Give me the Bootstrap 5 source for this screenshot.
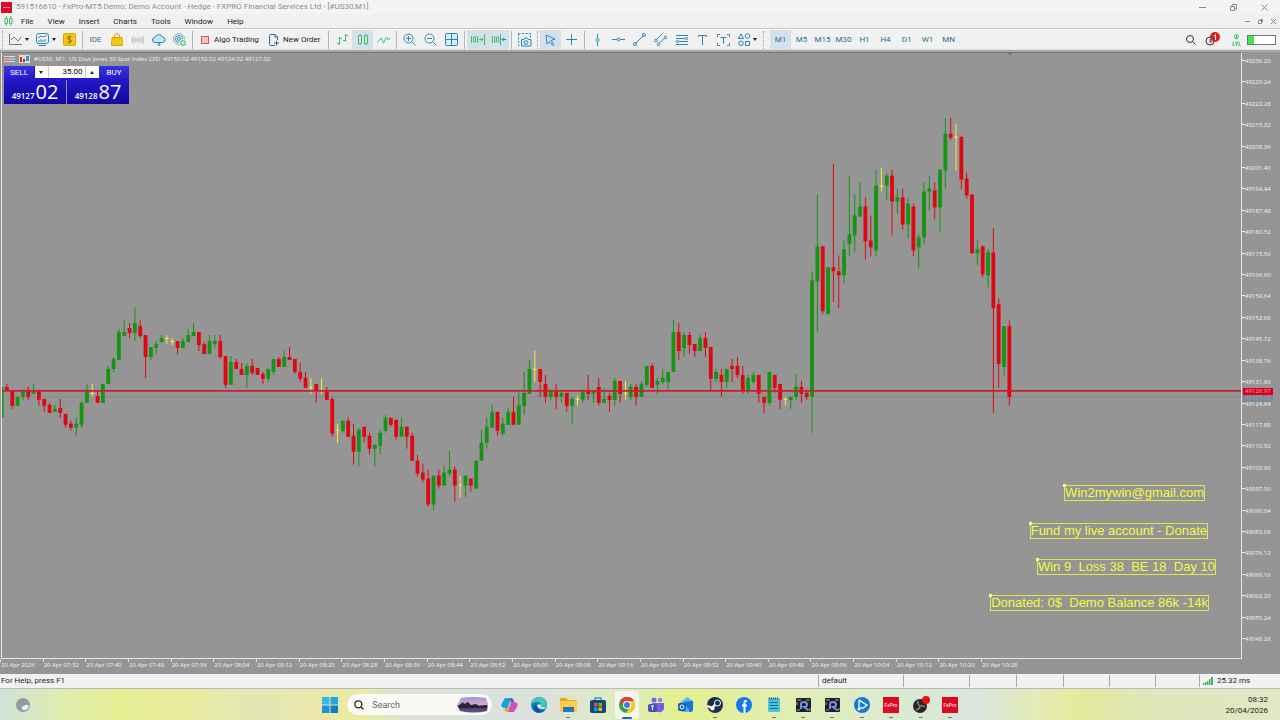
<!DOCTYPE html>
<html lang="en">
<head>
<meta charset="utf-8">
<meta name="viewport" content="width=device-width, initial-scale=1">
<title>FxPro MT5 - #US30,M1</title>
<link href="https://cdn.jsdelivr.net/npm/bootstrap@5.3.0/dist/css/bootstrap.min.css" rel="stylesheet">
<style>
:root{--line:#2b86b8;--green:#3fc163;--chart:#959595}
body{font-family:Roboto,"Open Sans",sans-serif;font-size:8px;line-height:14px;color:#1c1c1c;background:var(--chart)}
button{font:inherit;color:inherit;background:none;border:0;padding:0}
svg{display:block;flex:none}
.titlebar{height:14px;background:#f4f4f4;color:#8c8c8c}
.menubar{height:15px;background:#f0f0f0;border-bottom:1px solid #c4c4c4;line-height:15px}
.menubar a{color:#1c1c1c;text-decoration:none}
.menu-links{gap:14px}
.toolbar-row{height:21px;background:#f1f1f1;border-top:1px solid #fafafa;border-bottom:1px solid #e2e2e2}
.tool{width:21px;height:19px;display:flex;align-items:center;justify-content:center}
.tool.wide{width:27px;gap:2px}
.tool.on{background:#d3e1ec}
.tool svg,.ic svg{fill:none;stroke:var(--line);stroke-width:1}
.tool svg.gr{stroke:var(--green)}
.labelled{display:flex;align-items:center;gap:5px;padding-left:5px;white-space:nowrap}
.labelled.algo{width:69px;padding-left:6px}
.labelled.order{width:62px;gap:4px}
.rule-v{width:1px;height:18px;background:#b5b5b5;margin:0 2px}
.grip{width:1px;height:18px;border-left:1px dotted #999;margin:0 2px}
.tf{color:#26708f}
.caret-s{width:0;height:0;border:2px solid transparent;border-top:3px solid #222;border-bottom:0}
.window-edge{background:var(--chart);border-top:2px solid #a8a8a8}
.plot{border:1px solid #e4e4e4;border-top-color:#777;min-height:300px;margin-left:1px}
.plot>svg{position:absolute;inset:0;width:100%;height:100%}
.tiny{font-family:"Open Sans","Noto Sans",sans-serif;font-size:6px;line-height:8px;color:#f2f2f2}
.caption-row{position:absolute;left:2px;top:2px;gap:4px;white-space:pre}
.ticket{position:absolute;left:2px;top:13px;width:125px;color:#fff}
.blue-btn{background:linear-gradient(#3b34dd,#2419c8);height:14px;width:30px;line-height:14px}
.blue-px{background:linear-gradient(#2318c6,#1208a0);height:24px;line-height:24px;font-family:"Open Sans","Noto Sans",sans-serif;font-size:20px}
.blue-px small{font-size:8px;font-weight:600;margin-right:1px}
.px-pair{gap:1px;background:#8f8ce0}
.lots{background:#fff;color:#222;height:12px}
.lots input{width:38px;border:0;border-left:1px solid #ccc;border-right:1px solid #ccc;text-align:right;font:inherit;height:12px;padding:0 2px}
.lots button{width:13px}
.tag{position:absolute;border:1px solid #dfe64a;color:#f4fa3c;font:13px/14px "Liberation Sans",Arial,sans-serif;white-space:pre}
.tag::before{content:"";position:absolute;left:-2px;top:-2px;width:3px;height:3px;background:#fbfda0}
.axis-y{width:38px;padding:5px 0 16px}
.axis-y div::before{content:"";display:inline-block;width:3px;height:1px;background:#eee;vertical-align:2px}
.price-now{position:absolute;left:1px;width:30px;height:7px;line-height:7px;padding-left:2px}
.axis-x{height:15px;display:grid;grid-template-columns:repeat(30,3.333%);white-space:nowrap;overflow:hidden;line-height:13px}
.axis-x div{border-left:1px solid #ddd;height:3px}
.status{height:15px;background:#f1f1f1;border-bottom:1px solid #bbb}
.status>div{border-left:1px solid #a8a8a8;height:12px;line-height:12px;padding-left:3px}
.status>div:first-child{border:0;padding-left:1px}
.taskbar{height:31px;background:linear-gradient(90deg,#cfe3d8 0,#e0ecae 5%,#e6ef94 9%,#eaec9c 14%,#e1e7b6 20%,#ece7a8 25%,#e9eca0 28%,#dde2dc 32%,#dbe2de 42%,#dfecbb 49%,#e3ef8e 53%,#e2eeac 60%,#dcebca 68%,#d8e6de 76%,#e4ebb6 81%,#e5ea9c 84%,#dfe7bb 90%,#e0e7c4 100%)}
.dock{width:644px}
.ic{width:24px;height:28px;display:flex;align-items:center;justify-content:center;position:relative}
.ic.run::after{content:"";position:absolute;bottom:1px;width:4px;height:1px;background:#76796c}
.ic.active{background:#f3f7ee;border-radius:3px}
.ic.active::after{content:"";position:absolute;bottom:0;width:10px;height:2px;border-radius:1px;background:#1970ad}
.ic svg{stroke:none}
.find{width:145px;height:21px;border-radius:11px;background:#f9faf5;padding-left:7px}
.find input{width:77px;border:0;background:none;font-size:9px;padding:0;outline:0}
.find input::placeholder{color:#666;opacity:1}
.side{width:80px;line-height:11px}
</style>
</head>
<body class="min-vh-100 d-flex flex-column overflow-hidden">
<header>
  <div class="titlebar d-flex align-items-center">
    <svg class="me-1" width="12" height="11"><path d="M1 0h11v11H1z" fill="#dc0a20"/><path d="M3 5.500h7" stroke="#f4a0a8" stroke-width="1" stroke-dasharray="2 .5"/></svg>
    <span class="flex-grow-1">591516610 - FxPro-MT5 Demo: Demo Account - Hedge - FXPRO Financial Services Ltd - [#US30,M1]</span>
    <div class="d-flex gap-4 pe-2 me-1">
      <button aria-label="Minimise"><svg width="7" height="7" stroke="#888"><path d="M0 3.500h7"/></svg></button>
      <button aria-label="Restore"><svg width="7" height="7" fill="none" stroke="#888"><path d="M.5 2.500h4v4h-4zM2 2V.5h4.500V5H5"/></svg></button>
      <button aria-label="Close"><svg width="7" height="7" stroke="#888"><path d="M.5.5l6 6m0-6l-6 6"/></svg></button>
    </div>
  </div>
  <nav class="menubar d-flex align-items-center ps-1">
    <svg class="me-2" width="9" height="10" fill="none" stroke="#3fc163"><path d="M1 2.500h2.500v5H1zM5.500 2.500H8v5H5.500zM2.300 0v2.500m0 5V10M6.800 0v2.500m0 5V10"/></svg>
    <div class="menu-links d-flex flex-grow-1"><a href="#">File</a><a href="#">View</a><a href="#">Insert</a><a href="#">Charts</a><a href="#">Tools</a><a href="#">Window</a><a href="#">Help</a></div>
    <div class="d-flex gap-2 pe-1">
      <button aria-label="Minimise chart"><svg width="5" height="5" stroke="#888"><path d="M0 2.500h5"/></svg></button>
      <button aria-label="Restore chart"><svg width="5" height="5" fill="none" stroke="#888"><path d="M.5 1.500h3v3h-3zM2 .5h2.500V3"/></svg></button>
      <button aria-label="Close chart"><svg width="5" height="5" stroke="#888"><path d="M0 0l5 5m0-5L0 5"/></svg></button>
    </div>
  </nav>
  <div class="toolbar-row d-flex align-items-center">
    <i class="grip"></i>
    <button class="tool wide" aria-label="Chart"><svg width="15" height="13"><path d="M1.500 1v10.500H14" stroke="#777"/><path d="M3 7l3-3 4 4 3-4"/></svg><i class="caret-s"></i></button>
    <button class="tool wide" aria-label="Indicators"><svg width="15" height="13"><rect x="1.500" y=".5" width="12" height="10" rx="2"/><path d="M3 5l3-2 3 1 3-2M4 9V7m2 2V6m2 3V7m2 2V6m-6 6.500h7"/></svg><i class="caret-s"></i></button>
    <button class="tool" aria-label="Quotes"><svg width="13" height="13"><rect x=".5" y=".5" width="12" height="12" rx="1" fill="#f6c615" stroke="#d9a505"/><path d="M8.500 4.500C8 3 4.500 3 4.500 5s4 1 4 3-3.500 2-4 .5M6.500 2.500v8" stroke="#93700a"/></svg></button>
    <i class="rule-v"></i>
    <button class="tool tf">IDE</button>
    <button class="tool" aria-label="Market"><svg width="12" height="13"><path d="M1 4.500h10l.5 8H.5z" fill="#f7c51a" stroke="#d9a505"/><path d="M3.500 6V3a2.500 2.500 0 015 0v3" stroke="#d9a505"/></svg></button>
    <button class="tool" aria-label="Signals"><svg width="14" height="10" style="stroke:#b0b0b0"><circle cx="7" cy="5" r="1.500"/><path d="M4.500 2.500q-2 2.500 0 5M2.500 1q-3 4 0 8M9.500 2.500q2 2.500 0 5M11.500 1q3 4 0 8"/></svg></button>
    <button class="tool" aria-label="Cloud"><svg width="14" height="12"><path d="M4 8.500H3a2.500 2.500 0 010-5 4 4 0 017.500-.5A2.800 2.800 0 0111 8.500H4M7 8.500v1" fill="#c4e6f7"/><circle cx="7" cy="10.500" r="1"/></svg></button>
    <button class="tool" aria-label="Add"><svg width="14" height="14"><circle cx="6" cy="6" r="5.500" stroke="#8aa"/><circle cx="6" cy="6" r="3.500"/><circle cx="6" cy="6" r="1.500"/><circle cx="10" cy="10" r="3.500" fill="#4fc86e" stroke="#fff"/><path d="M8 10h4m-2-2v4" stroke="#fff"/></svg></button>
    <i class="rule-v"></i>
    <button class="labelled algo"><svg width="8" height="8"><rect x=".5" y=".5" width="7" height="7" fill="#f9c9c9" stroke="#d85555"/></svg>Algo Trading</button>
    <button class="labelled order"><svg width="10" height="12" fill="none" stroke="#2b6f95"><path d="M6 11.500H1.500a1 1 0 01-1-1v-9a1 1 0 011-1H6l2.500 2.500V6M6 .5V3h2.500M7.500 6.500v5M5 9h5"/></svg>New Order</button>
    <i class="rule-v"></i>
    <button class="tool" aria-label="Bars"><svg class="gr" width="12" height="13"><path d="M3.500 4v8M1 10.500h2.500m0-5H6M9.500 1v8M7 7.500h2.500m0-5H12"/></svg></button>
    <button class="tool on" aria-label="Candles"><svg class="gr" width="12" height="13"><path d="M1.500 2.500h3v8h-3zM7.500 2.500h3v8h-3zM3 1v1m0 9v1m6-11v1m0 9v1"/></svg></button>
    <button class="tool" aria-label="Line"><svg class="gr" width="13" height="10"><path d="M.5 7.500L4 3l2.500 5L9.500 2l2 3 1.500-2"/></svg></button>
    <i class="rule-v"></i>
    <button class="tool" aria-label="Zoom in"><svg width="13" height="13"><circle cx="5.500" cy="5.500" r="4.500"/><path d="M9 9l3.500 3.500M3 5.500h5M5.500 3v5"/></svg></button>
    <button class="tool" aria-label="Zoom out"><svg width="13" height="13"><circle cx="5.500" cy="5.500" r="4.500"/><path d="M9 9l3.500 3.500M3 5.500h5"/></svg></button>
    <button class="tool" aria-label="Tile"><svg width="13" height="13"><rect x=".5" y=".5" width="12" height="12" rx="1" fill="#d9edf6"/><path d="M6.500 0v13M0 6.500h13"/></svg></button>
    <i class="rule-v"></i>
    <button class="tool on" aria-label="Auto scroll"><svg class="gr" width="14" height="11"><path d="M.5 2v7M2.500 3h2v5h-2zM6.500 2v7"/><path d="M8 5.500h4M10 3.500l2 2-2 2M13.500 0v11"/></svg></button>
    <button class="tool on" aria-label="Shift"><svg class="gr" width="14" height="11"><path d="M.5 2v7M2.500 3h2v5h-2zM6.500 2v7M8.500 0v11"/><path d="M10 5.500h4M12 3.500l-2 2 2 2" stroke="#2b86b8"/></svg></button>
    <i class="rule-v"></i>
    <button class="tool" aria-label="Screenshot"><svg width="14" height="14"><rect x=".5" y=".5" width="12" height="12" stroke-dasharray="2 1.500"/><path d="M3.500 6.500H6l1-1.500h2.500l1 1.500H13v6.500H3.500z" fill="#d5ecf8"/><circle cx="8" cy="9.500" r="1.800"/></svg></button>
    <i class="grip"></i>
    <button class="tool on" aria-label="Cursor"><svg width="11" height="12"><path d="M1 1l9 4-4 1.500 3 4-1.500 1-2.700-4L2 10z"/></svg></button>
    <button class="tool" aria-label="Crosshair"><svg width="11" height="11"><path d="M5.500 0v11M0 5.500h11"/></svg></button>
    <i class="rule-v"></i>
    <button class="tool" aria-label="Vertical line"><svg width="5" height="12"><path d="M2.500 0v4m0 4v4"/><circle cx="2.500" cy="6" r="1.500"/></svg></button>
    <button class="tool" aria-label="Horizontal line"><svg width="13" height="5"><path d="M0 2.500h5m3 0h5"/><circle cx="6.500" cy="2.500" r="1.500"/></svg></button>
    <button class="tool" aria-label="Trend line"><svg width="13" height="13"><path d="M3 10l7-7"/><circle cx="2" cy="11" r="1.500"/><circle cx="11" cy="2" r="1.500"/></svg></button>
    <button class="tool" aria-label="Channel"><svg width="13" height="13"><path d="M2.500 6.500L8 1M5 10.500l5.500-5.500"/><circle cx="1.800" cy="7.500" r="1.300"/><circle cx="4.500" cy="11.500" r="1.300"/><circle cx="11.500" cy="4.500" r="1.300"/></svg></button>
    <button class="tool" aria-label="Fibonacci"><svg width="14" height="12"><path d="M1 1.500h12M1 4.500h9M4 7.500h9M1 10.500h12"/><circle cx="11.500" cy="4.500" r="1.200"/><circle cx="2.500" cy="7.500" r="1.200"/></svg></button>
    <button class="tool" aria-label="Text"><svg width="9" height="10"><path d="M.5 2V.5h8V2m-4-1.500V10"/></svg></button>
    <button class="tool" aria-label="Label"><svg width="13" height="12"><path d="M.5 3V.5H3m7 0h2.500V3m0 6v2.500H10m-7 0H.5V9" stroke="#777"/><path d="M3.500 3.500h6m-3 0V10"/></svg></button>
    <button class="tool wide" aria-label="Shapes"><svg width="13" height="13"><path d="M3 .8L5.500 5.500H.5zM7.500 8.500h4v4h-4z"/><circle cx="9.500" cy="3" r="2.300"/><circle cx="3" cy="10.300" r="2.300"/></svg><i class="caret-s"></i></button>
    <i class="grip"></i>
    <div class="d-flex tf ms-1"><button class="tool on">M1</button><button class="tool">M5</button><button class="tool">M15</button><button class="tool">M30</button></div>
    <div class="d-flex tf"><button class="tool">H1</button><button class="tool">H4</button><button class="tool">D1</button><button class="tool">W1</button><button class="tool">MN</button></div>
    <div class="d-flex align-items-center ms-auto pe-1">
      <button class="tool" aria-label="Search"><svg width="10" height="10" style="stroke:#333"><circle cx="4" cy="4" r="3.500"/><path d="M6.500 6.500l3 3"/></svg></button>
      <button class="tool" aria-label="Notifications"><svg width="16" height="15"><circle cx="6" cy="9" r="4" stroke="#333"/><path d="M6 7v3h2" stroke="#333"/><circle cx="11" cy="5" r="5" fill="#d3231c" stroke="none"/><path d="M10 4l1.500-1.500V8" stroke="#fff"/></svg></button>
      <button class="tool ms-1" aria-label="Level"><svg class="gr" width="9" height="12"><circle cx="4.500" cy="2.500" r="2"/><path d="M4.500 1.500v4M1 7.500v4h1.500M3.500 7.500l1 4 1-4M7 7.500v4h1.500"/></svg></button>
      <div class="d-flex border border-secondary bg-white" style="width:29px;height:10px"><i style="width:22%;background:#4de04d"></i></div>
    </div>
  </div>
</header>
<main class="window-edge flex-grow-1 d-flex flex-column ps-0">
  <div class="d-flex flex-grow-1">
    <section class="plot flex-grow-1 position-relative">
      <svg id="candles" viewBox="2 52 1239 607" preserveAspectRatio="none"></svg>
      <div class="caption-row d-flex align-items-center tiny">
        <svg width="11" height="8"><path d="M1 1h4v6H1z" fill="#d66"/><path d="M6 1h4v6H6z" fill="#79c"/><path d="M0 1.500h11M0 4h11M0 6.500h11" stroke="#fff" stroke-width=".7"/></svg>
        <svg width="11" height="8"><path d="M0 0h11v8H0z" fill="#ddd"/><path d="M1 2h2v5H1zM4 4h2v3H4z" fill="#d22"/><path d="M7 1h3v5H7z" fill="#3a8fe0"/></svg>
        <span>#US30, M1:  US Dow Jones 30 Spot Index CFD  49150.02 49152.02 49124.02 49127.02</span>
      </div>
      <div class="ticket">
        <div class="d-flex justify-content-between" style="background:#2419c8">
          <button class="blue-btn">SELL</button>
          <div class="lots d-flex"><button aria-label="Less"><svg class="m-auto" width="4" height="3"><path d="M0 0l2 3 2-3z" fill="#222"/></svg></button><input aria-label="Volume" value="35.00"><button aria-label="More"><svg class="m-auto" width="4" height="3"><path d="M0 3l2-3 2 3z" fill="#222"/></svg></button></div>
          <button class="blue-btn">BUY</button>
        </div>
        <div class="px-pair d-flex"><button class="blue-px flex-fill"><small>49127</small>02</button><button class="blue-px flex-fill"><small>49128</small>87</button></div>
      </div>
      <div class="tag" style="right:36px;bottom:157px">Win2mywin@gmail.com</div>
      <div class="tag" style="right:33px;bottom:119px">Fund my live account - Donate</div>
      <div class="tag" style="right:25px;bottom:83px">Win 9  Loss 38  BE 18  Day 10</div>
      <div class="tag" style="right:32px;bottom:47px">Donated: 0$  Demo Balance 86k -14k</div>
    </section>
    <aside class="axis-y position-relative d-flex flex-column justify-content-between tiny" id="prices">
      <span class="price-now" style="top:56.500%;background:#7b8a98;color:#93a0ac">49127.02</span>
      <span class="price-now" style="top:55.300%;background:#d8001c;color:#f59aa4">49128.97</span>
    </aside>
  </div>
  <div class="axis-x tiny" id="times"></div>
</main>
<footer>
  <div class="status d-flex align-items-center">
    <div class="flex-grow-1">For Help, press F1</div><div style="width:85px">default</div><div style="width:66px"></div><div style="width:47px"></div><div style="width:47px"></div><div style="width:46px"></div><div style="width:46px"></div><div style="width:44px"></div>
    <div class="d-flex align-items-center gap-1" style="width:81px"><svg width="10" height="8" fill="#3fb95f"><path d="M0 6h1.500v2H0zM2 5h1.500v3H2zM4 4h1.500v4H4zM6 2h1.500v6H6zM8 0h2v8H8z"/></svg>25.32 ms</div>
  </div>
  <div class="taskbar d-flex align-items-center justify-content-between">
    <div class="side ps-3"><svg width="14" height="14"><circle cx="7" cy="7" r="7" fill="#8f9aa4"/><path d="M6 11a2 2 0 012-3 3 3 0 015 0 7 7 0 01-3 4H7z" fill="#eef2f5"/></svg></div>
    <div class="dock d-flex align-items-center justify-content-between">
      <button class="ic" aria-label="Start"><svg width="16" height="16"><path d="M0 0h7.500v7.500H0z" fill="#35b5ea"/><path d="M8.500 0H16v7.500H8.500z" fill="#25a3e2"/><path d="M0 8.500h7.500V16H0z" fill="#1b93d9"/><path d="M8.500 8.500H16V16H8.500z" fill="#0d7fcc"/></svg></button>
      <div class="find d-flex align-items-center gap-2"><svg width="10" height="10" fill="none" stroke="#222" stroke-width="1.300"><circle cx="4.300" cy="4.300" r="3.500"/><path d="M7 7l2.500 2.500"/></svg><input type="search" placeholder="Search" aria-label="Search"><svg width="32" height="16" viewBox="0 0 32 16"><defs><linearGradient id="sky" x2="0" y2="1"><stop stop-color="#8b9be0"/><stop offset=".5" stop-color="#e5a5c8"/><stop offset=".6" stop-color="#3d3a60"/><stop offset="1" stop-color="#605a88"/></linearGradient></defs><path d="M4 1q12-2 25 0l2 6-1 7q-13 3-27 0L0 8z" fill="url(#sky)"/><path d="M1 9l5-4 1 2 4-2 3 3 5-1 3 2 8-1v3H2z" fill="#25233d"/></svg></div>
      <button class="ic" aria-label="Copilot"><svg width="17" height="16"><path d="M4 1h6l-3 10H3Q-1 10 1 6z" fill="#239bdc"/><path d="M10 1q3 0 3 4H8L6 12H2l2 1h3z" fill="#65c4a0"/><path d="M13 5q5 0 3 5l-3 5H7l3-10z" fill="#d34fb9"/><path d="M4 11h4l-1 4q-4 0-3-4z" fill="#f6a43a"/><path d="M9 1q3 0 4 4h-3z" fill="#3559c8"/></svg></button>
      <button class="ic" aria-label="Edge"><svg width="16" height="16"><circle cx="8" cy="8" r="8" fill="#1679c9"/><path d="M0 8a8 8 0 0116 0q0 3-4 3H9q3-6-3-6-5 0-6 3z" fill="#42c7b5"/><path d="M6 8q0 6 7 6-8 4-10-2-1-4 3-4z" fill="#0b4f9d"/><path d="M6 8q0 4 6 4 2 0 3-1-2-1-5-.500 1-5-4-2.500z" fill="#dfeef0"/></svg></button>
      <button class="ic run" aria-label="Explorer"><svg width="17" height="15"><path d="M0 1h6l2 2h9v12H0z" fill="#e9a91f"/><path d="M0 4h17v11H0z" fill="#fccf4b"/><path d="M3 10h11v5H3z" fill="#1f78c4"/></svg></button>
      <button class="ic" aria-label="Store"><svg width="16" height="16"><path d="M5 4V1h6v3" fill="none" stroke="#2e9bdc" stroke-width="1.500"/><rect y="3" width="16" height="13" rx="2" fill="#164679"/><path d="M4 6h3.500v3.500H4z" fill="#f25022"/><path d="M8.500 6H12v3.500H8.500z" fill="#7fba00"/><path d="M4 10.500h3.500V14H4z" fill="#00a4ef"/><path d="M8.500 10.500H12V14H8.500z" fill="#ffb900"/></svg></button>
      <button class="ic active" aria-label="Chrome"><svg width="16" height="16"><circle cx="8" cy="8" r="8" fill="#2fa24f"/><path d="M1 4a8 8 0 0114 0L8 6 5 9z" fill="#e13d32"/><path d="M15 4a8 8 0 01-8 12l4-7-1-5z" fill="#fbc723"/><circle cx="8" cy="8" r="4" fill="#fff"/><circle cx="8" cy="8" r="3" fill="#3b7de4"/></svg></button>
      <button class="ic" aria-label="Teams"><svg width="16" height="16"><circle cx="6" cy="3" r="2.500" fill="#6a6fd9"/><circle cx="12" cy="3" r="2.300" fill="#8d7ee8"/><path d="M4 6h12v6q-2 4-6 3H5z" fill="#7462da"/><rect y="7" width="9" height="8" rx="2" fill="#4650b6"/><path d="M3 9h3M4.500 9v4" stroke="#fff"/></svg></button>
      <button class="ic" aria-label="Outlook"><svg width="16" height="15"><path d="M2 6l7-6 6 4v8q0 3-3 3H4z" fill="#4fb8ef"/><path d="M6 5l9-1v8q0 3-3 3z" fill="#1874d1"/><rect y="6" width="8" height="8" rx="2" fill="#1160ba"/><circle cx="4" cy="10" r="2" fill="none" stroke="#fff"/></svg></button>
      <button class="ic run" aria-label="Steam"><svg width="16" height="16"><circle cx="8" cy="8" r="8" fill="#14314f"/><path d="M0 9l5 2 4-4" stroke="#e8eef2" stroke-width="2.500" fill="none"/><circle cx="10.500" cy="6" r="3" fill="#14314f" stroke="#fff"/><circle cx="5.500" cy="11.500" r="2" fill="#fff"/></svg></button>
      <button class="ic" aria-label="Facebook"><svg width="16" height="16"><circle cx="8" cy="8" r="8" fill="#1678ee"/><path d="M11 4H9.500Q8.500 4 8.500 6v10M6 8.500h5" fill="none" stroke="#fff" stroke-width="2"/></svg></button>
      <button class="ic run" aria-label="Notepad"><svg width="12" height="15"><rect y="1" width="12" height="14" rx="1" fill="#4cc3dc"/><path d="M1 1.500h10" stroke="#255b77" stroke-width="2" stroke-dasharray="1 1"/><path d="M2 5.500h8M2 8.500h8M2 11.500h8" stroke="#176c8c"/></svg></button>
      <button class="ic run" aria-label="Emulator"><svg width="15" height="14"><rect width="15" height="14" rx="1" fill="#1b1d2c"/><path d="M1 2h4m5 0h4M1 12h3m7 0h3M1 4v3m13 3v2" stroke="#c69b62"/><path d="M5 11V6q0-2 3-2t3 2.500T8 9l4 3" fill="none" stroke="#7193e3" stroke-width="2"/></svg></button>
      <button class="ic run" aria-label="Emulator 2"><svg width="15" height="14"><rect width="15" height="14" rx="1" fill="#1b1d2c"/><path d="M1 2h4m5 0h4M1 12h3m7 0h3M1 4v3m13 3v2" stroke="#c69b62"/><path d="M5 11V6q0-2 3-2t3 2.500T8 9l4 3" fill="none" stroke="#7193e3" stroke-width="2"/></svg></button>
      <button class="ic run" aria-label="Player"><svg width="16" height="16"><circle cx="8" cy="8" r="8" fill="#1478d8"/><path d="M5 3l8 5-5 4M5 3v9l3-2" fill="none" stroke="#d9f1ff" stroke-width="1.500"/><circle cx="5" cy="12" r="1.500" fill="#fff"/></svg></button>
      <button class="ic run" aria-label="FxPro"><svg width="16" height="16"><path d="M0 0h16v16H0z" fill="#dc0a20"/><text x="8" y="9.500" font-size="5" text-anchor="middle" fill="#fff">FxPro</text></svg></button>
      <button class="ic run" aria-label="OBS"><svg width="18" height="18"><circle cx="8" cy="10" r="7" fill="#25252a"/><path d="M8 10q-3-2-2-5m2 5q3-1 5 1M8 10q0 3-4 4" fill="none" stroke="#8a8a8a" stroke-width="1.500"/><circle cx="14" cy="4" r="4" fill="#e41216"/></svg></button>
      <button class="ic run" aria-label="FxPro 2"><svg width="16" height="16"><path d="M0 0h16v16H0z" fill="#dc0a20"/><text x="8" y="9.500" font-size="5" text-anchor="middle" fill="#fff">FxPro</text></svg></button>
    </div>
    <div class="side text-end pe-2"><div class="pe-1">08:32<br>20/04/2026</div></div>
  </div>
</footer>
<script src="https://cdn.jsdelivr.net/npm/bootstrap@5.3.0/dist/js/bootstrap.bundle.min.js"></script>
<script>
// One entry per minute: colour, high, body top, body bottom, low (g up, r down, y unchanged)
const bars = `g387,387,418,418 r384,387,391,391 r390,390,406,409 g397,397,406,406 g390,390,397,400 r387,390,397,400 g384,390,394,394 r390,390,400,406 r399,399,406,412 r403,405,413,413
g405,409,412,412 r399,408,413,418 r414,414,425,428 r421,424,428,431 g418,424,428,436 g402,403,425,428 g384,390,403,403 y384,393,394,397 r390,396,403,403 g384,384,403,403
g366,369,384,384 g357,359,369,372 g329,332,360,360 g320,332,336,336 r323,328,333,338 g307,323,333,341 r320,326,336,338 r335,335,357,378 g347,347,357,360 g341,344,348,354
g335,338,342,342 y335,338,339,344 y338,341,342,345 r341,341,348,354 g338,341,348,348 g329,335,342,342 g323,332,336,336 r332,332,345,351 r342,344,354,354 g335,341,354,354
g335,341,344,348 r335,341,357,359 r356,356,385,388 g356,362,385,385 r359,362,369,369 r363,369,375,375 g363,366,375,388 r359,366,373,375 r368,368,375,375 r372,374,379,384
g369,369,379,382 g359,359,372,375 r357,359,367,367 g351,357,367,367 r347,357,360,360 r359,359,372,374 r363,372,379,382 r372,378,388,388 y378,387,388,394 r384,384,391,403
y378,390,391,394 r387,390,400,400 r397,399,434,437 y424,430,431,443 g421,421,431,433 r418,421,437,437 r424,436,452,465 g428,430,452,467 r427,427,437,443 r433,436,449,455
g445,445,449,467 g430,433,446,455 g415,418,431,433 r418,418,425,427 r420,420,437,440 g418,427,437,437 r427,427,437,449 r433,436,461,461 r455,461,474,477 r464,473,480,483
r470,479,505,507 g476,476,505,511 r470,476,486,489 g466,473,486,486 g451,470,474,477 r467,470,486,502 y476,485,486,498 g476,476,486,498 r479,479,486,492 g461,461,489,489
g430,443,461,461 g418,427,443,449 g405,412,428,428 r412,412,431,436 g418,424,434,436 g408,412,425,425 r397,412,425,425 g393,405,425,425 g372,393,406,415 g360,369,394,394
y351,369,370,382 r369,369,382,397 r375,384,397,403 g390,390,397,400 r384,390,397,409 g390,393,397,403 r393,393,406,412 g397,399,406,424 y396,399,400,406 g390,390,400,403
r375,390,394,400 g390,391,394,403 r378,387,403,406 g388,399,403,403 r393,396,400,412 g378,381,400,406 r381,381,394,403 y381,393,394,400 g384,387,397,400 r384,387,397,406
g381,384,397,397 g366,366,385,387 r363,366,388,388 g378,381,385,394 g369,378,382,385 g372,372,382,391 g320,332,372,372 r323,332,351,360 g332,335,348,357 r332,335,345,354
r344,344,351,357 g335,338,351,351 r332,338,348,357 r347,347,379,391 g369,372,379,382 r369,375,382,397 g369,369,382,388 r359,366,369,382 r357,366,375,378 r366,375,391,394
g375,378,391,394 g372,375,382,384 r375,375,394,403 r397,397,403,413 g372,372,403,406 r375,375,388,393 r384,384,400,409 y397,399,400,406 g397,397,400,409 g375,387,397,400
r381,387,394,403 r390,393,397,400 g271,280,397,433 g194,246,281,332 r246,246,311,314 g267,267,314,314 r163,267,271,302 r255,271,275,308 g240,249,275,283 g175,234,244,256
g194,215,235,252 g182,206,216,216 r197,206,241,259 r215,240,247,256 g169,185,250,256 y167,185,186,191 g173,175,185,200 r169,175,201,235 g188,197,201,213 r188,197,224,229
g198,203,224,238 r203,206,250,256 g234,237,247,268 g182,191,237,244 g175,188,191,210 r182,190,207,219 g169,169,207,232 g117,133,170,188 r117,133,137,139 y123,136,137,170
r136,136,179,189 r172,178,195,198 r194,194,253,253 g240,249,253,265 r245,246,274,277 g249,252,275,287 r228,252,308,413 r298,304,364,388 g326,326,367,376 r320,326,397,406`.split(/\s+/);
const fill = {g:'#159512', r:'#df0712', y:'#f0f03c'};
let out = '<path d="M0 397H1241" stroke="#7f8c92" stroke-width="1"/><path d="M1008 52h4l-2 2z" fill="#667"/>';
bars.forEach((b, i) => {
  const [h, t, e, l] = b.slice(1).split(',').map(Number), x = 1.6 + 5.332 * i, c = fill[b[0]];
  out += `<rect x="${x-.5}" y="${h}" width="1" height="${l-h}" fill="${c}"/><rect x="${x-1.9}" y="${t}" width="3.8" height="${e-t}" fill="${c}"/>`;
});
out += '<path d="M0 391H1241" stroke="#c8202e" stroke-width="1.6"/>';
document.getElementById('candles').innerHTML = out;
const prices = document.getElementById('prices');
for (let i = 0; i < 28; i++) prices.insertAdjacentHTML('beforeend', `<div>${(49236.2 - 6.96 * i).toFixed(2)}</div>`);
prices.querySelectorAll('.price-now').forEach(n => prices.append(n));
let times = '';
for (let i = 0; i < 24; i++) {
  const m = 444 + 8 * i;
  const hm = String(Math.floor(m / 60)).padStart(2, '0') + ':' + String(m % 60).padStart(2, '0');
  times += `<div>20 Apr ${i ? hm : '2026'}</div>`;
}
document.getElementById('times').innerHTML = times;
</script>
</body>
</html>
